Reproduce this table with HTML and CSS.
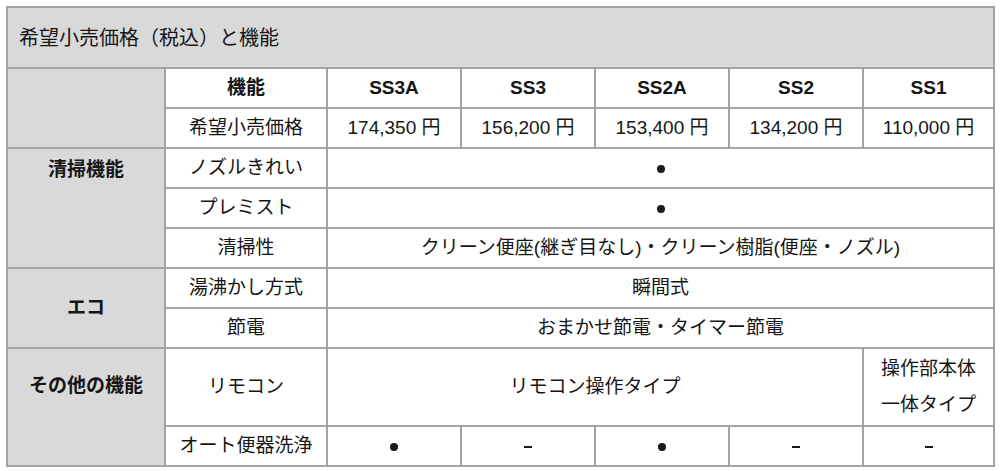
FILE: index.html
```html
<!DOCTYPE html>
<html lang="ja">
<head>
<meta charset="utf-8">
<link rel="stylesheet" href="styles.css">
</head>
<body>
<table class="spec">
  <colgroup>
    <col class="c-cat"><col class="c-feat"><col class="c-m"><col class="c-m"><col class="c-m"><col class="c-m"><col class="c-last">
  </colgroup>
  <tr><th colspan="7" class="title">希望小売価格（税込）と機能</th></tr>
  <tr>
    <td rowspan="2" class="cat"></td>
    <th class="hd">機能</th><th class="hd">SS3A</th><th class="hd">SS3</th><th class="hd">SS2A</th><th class="hd">SS2</th><th class="hd">SS1</th>
  </tr>
  <tr>
    <td>希望小売価格</td><td>174,350 円</td><td>156,200 円</td><td>153,400 円</td><td>134,200 円</td><td>110,000 円</td>
  </tr>
  <tr>
    <td rowspan="3" class="cat cat-top">清掃機能</td>
    <td>ノズルきれい</td><td colspan="5"><span class="dot"></span></td>
  </tr>
  <tr><td>プレミスト</td><td colspan="5"><span class="dot"></span></td></tr>
  <tr><td>清掃性</td><td colspan="5">クリーン便座(継ぎ目なし)・クリーン樹脂(便座・ノズル)</td></tr>
  <tr>
    <td rowspan="2" class="cat">エコ</td>
    <td>湯沸かし方式</td><td colspan="5">瞬間式</td>
  </tr>
  <tr><td>節電</td><td colspan="5">おまかせ節電・タイマー節電</td></tr>
  <tr class="r-tall">
    <td rowspan="2" class="cat cat-other">その他の機能</td>
    <td>リモコン</td><td colspan="4">リモコン操作タイプ</td><td class="two">操作部本体<br>一体タイプ</td>
  </tr>
  <tr>
    <td>オート便器洗浄</td><td><span class="dot"></span></td><td><span class="dash"></span></td><td><span class="dot"></span></td><td><span class="dash"></span></td><td><span class="dash"></span></td>
  </tr>
</table>
</body>
</html>
```
FILE: styles.css
```css
html, body {
  margin: 0;
  padding: 0;
  background: #ffffff;
}
body {
  padding: 6px 0 0 6px;
  font-family: "Liberation Sans", "Noto Sans CJK JP", sans-serif;
  color: #151515;
}
.spec {
  border-collapse: collapse;
  table-layout: fixed;
  width: 987px;
  font-size: 19px;
  border: 2px solid #a3a3a3;
}
.c-cat { width: 158px; }
.c-feat { width: 162px; }
.c-m { width: 134px; }
.c-last { width: 131px; }
.spec td, .spec th {
  border: 2px solid #a3a3a3;
  text-align: center;
  vertical-align: middle;
  padding: 0;
  height: 38px;
  font-weight: normal;
  background: #ffffff;
  line-height: 24px;
}
.spec th.hd {
  font-weight: bold;
}
.spec th.title {
  height: 59px;
  text-align: left;
  padding-left: 11px;
  background: #d9d9d9;
  font-size: 20px;
  font-weight: normal;
}
.spec td.cat {
  background: #d9d9d9;
  font-weight: bold;
}
.spec td.cat-top {
  vertical-align: top;
  padding-top: 9px;
}
.spec td.cat-other {
  vertical-align: top;
  padding-top: 25px;
}
.r-tall td {
  height: 76px;
}
.spec td.two {
  line-height: 36px;
}
.dot {
  display: inline-block;
  width: 8px;
  height: 8px;
  border-radius: 50%;
  background: #1a1a1a;
  vertical-align: middle;
}
.dash {
  display: inline-block;
  width: 8px;
  height: 2px;
  background: #1a1a1a;
  vertical-align: middle;
}
```
